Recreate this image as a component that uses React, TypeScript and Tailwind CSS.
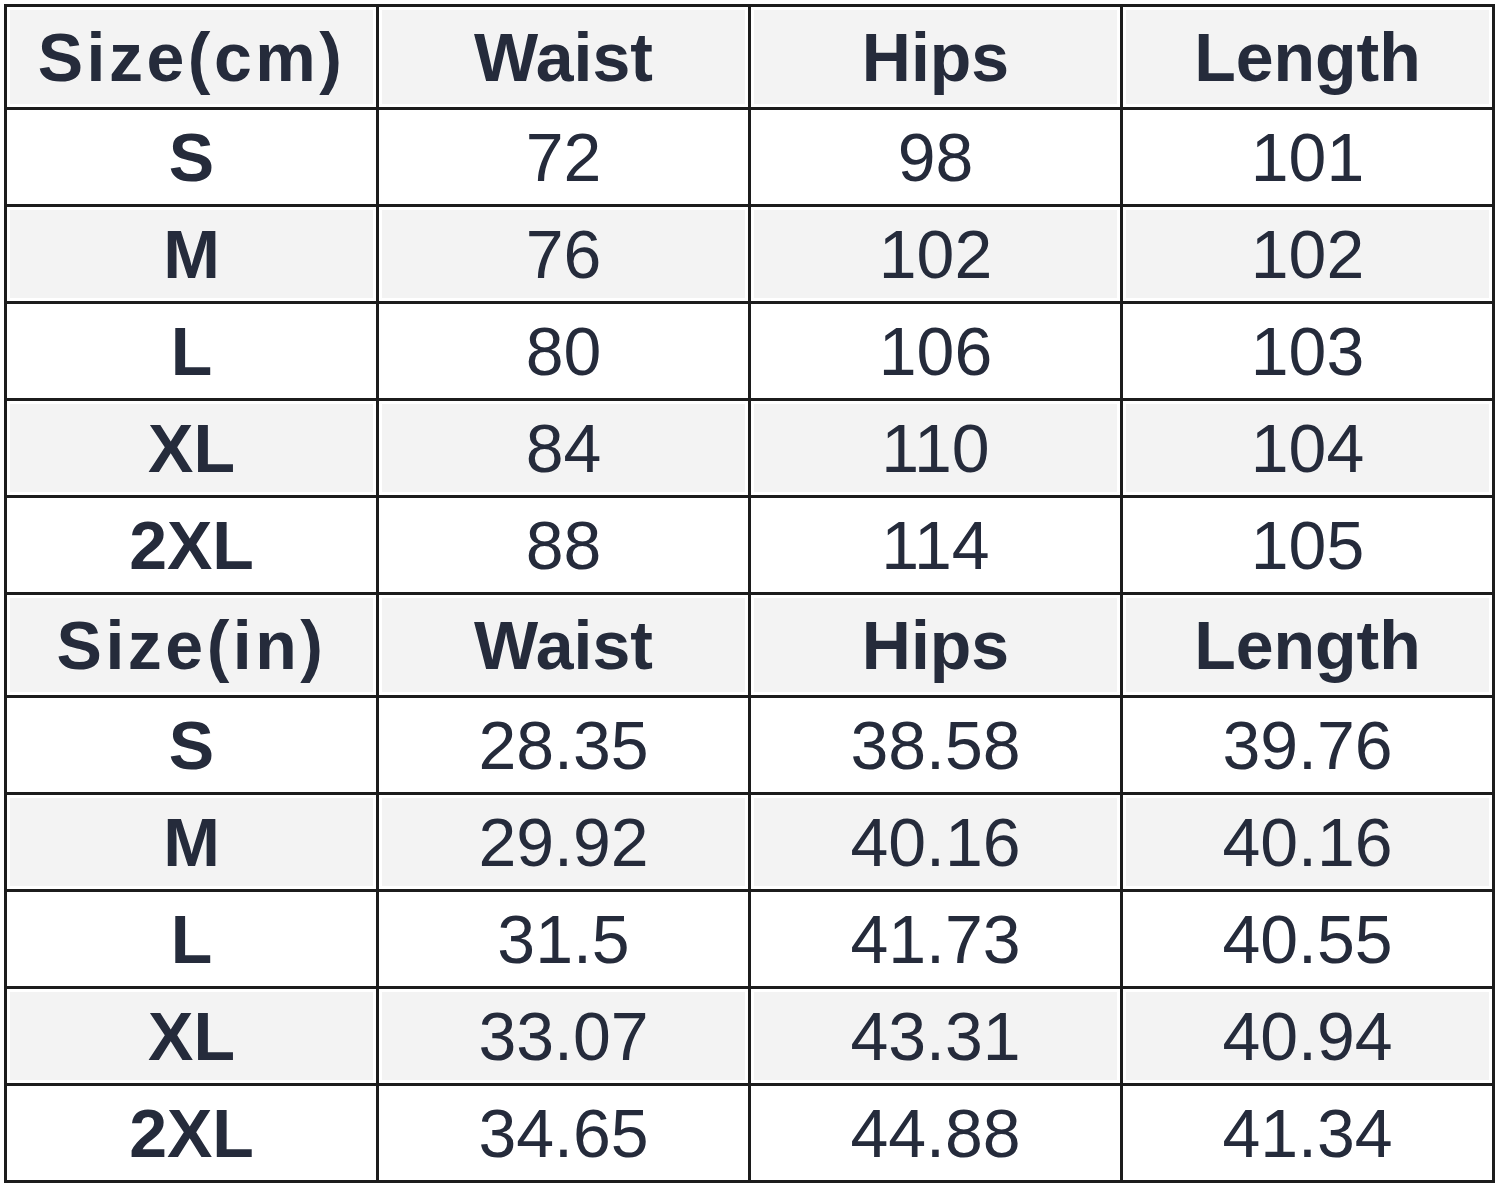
import React from "react";

const cm = [
  ["S", "72", "98", "101"],
  ["M", "76", "102", "102"],
  ["L", "80", "106", "103"],
  ["XL", "84", "110", "104"],
  ["2XL", "88", "114", "105"],
];
const inch = [
  ["S", "28.35", "38.58", "39.76"],
  ["M", "29.92", "40.16", "40.16"],
  ["L", "31.5", "41.73", "40.55"],
  ["XL", "33.07", "43.31", "40.94"],
  ["2XL", "34.65", "44.88", "41.34"],
];

function Cell({ text, bold, gray, wide }: { text: string; bold?: boolean; gray?: boolean; wide?: boolean }) {
  return (
    <div className="bg-white p-[3px] flex">
      <div
        className={
          "flex-1 flex items-center justify-center text-[68px] leading-none text-[#252b3b] " +
          (gray ? "bg-[#f3f3f3] " : "bg-white ") +
          (bold ? "font-bold " : "font-normal ") +
          (wide ? "tracking-[3.5px]" : "")
        }
      >
        {text}
      </div>
    </div>
  );
}

export default function App() {
  const cells: React.ReactNode[] = [];
  const addHeader = (first: string, k: string) => {
    [first, "Waist", "Hips", "Length"].forEach((t, i) =>
      cells.push(<Cell key={k + i} text={t} bold gray wide={i === 0} />)
    );
  };
  const addRows = (rows: string[][], k: string) => {
    rows.forEach((r, ri) =>
      r.forEach((t, ci) =>
        cells.push(<Cell key={k + ri + "-" + ci} text={t} bold={ci === 0} gray={ri % 2 === 1} />)
      )
    );
  };
  addHeader("Size(cm)", "h1");
  addRows(cm, "a");
  addHeader("Size(in)", "h2");
  addRows(inch, "b");
  return (
    <div className="w-[1500px] h-[1190px] bg-white pt-[4px] pl-[4px]" style={{ fontFamily: '"Liberation Sans", Arial, sans-serif' }}>
      <div className="w-[1491px] grid grid-cols-4 gap-[3px] p-[3px] bg-[#1c1c1c] grid-rows-[100px_94px_94px_94px_94px_94px_100px_94px_94px_94px_94px_94px]">
        {cells}
      </div>
    </div>
  );
}
